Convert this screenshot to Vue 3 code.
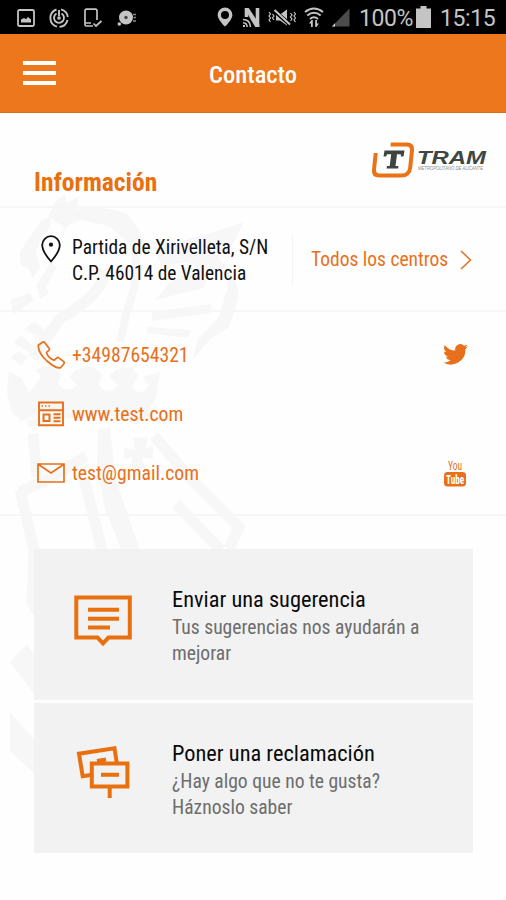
<template>
  <div class="screen">
    <div class="status-bar">
      <div class="status-left">
        <svg class="st-picture" viewBox="0 0 18 18" fill="none" stroke="currentColor" stroke-width="1.8">
          <rect x="1" y="1" width="16" height="16" rx="1.5" />
          <path d="M4 13.500V10.500l3-1.500 2 1.200L11 8l3 2.500v3z" fill="currentColor" stroke="none" />
        </svg>
        <svg class="st-sync" viewBox="0 0 20 20" fill="none" stroke="currentColor" stroke-width="1.900">
          <path d="M7.500 1.500A9 9 0 0 0 8 18.700M10.500 18.900A9 9 0 0 0 18.500 12M18.800 9A9 9 0 0 0 12 1.300" />
          <path d="M7.500 5.500a5 5 0 1 0 5 0" />
          <path d="M10 2v6" />
          <circle cx="10" cy="10" r="1.800" fill="currentColor" stroke="none" />
        </svg>
        <svg class="st-device" viewBox="0 0 18 20" fill="none" stroke="currentColor" stroke-width="1.700">
          <path d="M13 12V2.500a1.300 1.300 0 0 0-1.300-1.300H2.300A1.300 1.300 0 0 0 1 2.500v14.200A1.300 1.300 0 0 0 2.300 18H9M1 15h6" />
          <path d="M9.500 15.500l2.500 2.500 5.500-5" />
        </svg>
        <svg class="st-disc" viewBox="0 0 20 18">
          <circle cx="9" cy="8.500" r="7" fill="currentColor" />
          <circle cx="9" cy="8.500" r="1.700" fill="#444" />
          <circle cx="2.300" cy="15" r="1.800" fill="currentColor" />
          <path d="M16 5.500h3M16.500 8.500h2.500M16 12h3" stroke="#888" stroke-width="1.500" fill="none" />
        </svg>
      </div>
      <div class="status-right">
        <svg class="st-pin" viewBox="0 0 16 20">
          <path d="M8 0.500A7.400 7.400 0 0 0 .6 7.900C.6 12.500 8 19.500 8 19.500s7.400-7 7.400-11.600A7.400 7.400 0 0 0 8 .5zm0 3.400a4 4 0 1 1 0 8 4 4 0 0 1 0-8z" fill="currentColor" fill-rule="evenodd" />
        </svg>
        <svg class="st-nfc" viewBox="0 0 19 21" fill="none" stroke="currentColor">
          <path d="M4.500 10V1M15.500 20V1" stroke-width="3.600" />
          <path d="M2.700 1h4L17.300 17v3h-4L9 13z" fill="currentColor" stroke="none" />
          <path d="M1 12.500q7 0 7.500 7.500M1 15.800q4 .2 4.200 4.200" stroke-width="1.600" />
          <path d="M1 18h2v2H1z" fill="currentColor" stroke="none" />
        </svg>
        <svg class="st-mute" viewBox="0 0 28 17" fill="none" stroke="currentColor" stroke-width="1.500">
          <path d="M8 5.500v6h4l7 5V.5l-7 5z" fill="currentColor" stroke="none" />
          <path d="M6 1.500l16 14" stroke="#000" stroke-width="4" />
          <path d="M6.500 1l15.500 14.500" stroke-width="2" />
          <path d="M1 3l1.500 2L1 7l1.500 2L1 11l1.500 2M4.500 5L6 7 4.500 9 6 11M22.500 4L24 6l-1.500 2 1.500 2-1.500 2M26 3l1.500 2L26 7l1.500 2L26 11l1.500 2" stroke-width="1.200" />
        </svg>
        <svg class="st-wifi" viewBox="0 0 20 21" fill="none" stroke="currentColor" stroke-width="2">
          <path d="M1 5q9-7 18 0M3.300 8.500q6.700-5.500 13.400 0M6 12q4-3.500 8 0" />
          <path d="M7.500 13l-2.500 3.500h2V20h1.800V13zM12.500 20l2.500-3.500h-2V13h-1.800v7z" fill="currentColor" stroke="none" />
        </svg>
        <svg class="st-signal" viewBox="0 0 19 19">
          <path d="M18.500.5v18H1z" fill="#4c4c4c" />
          <path d="M4 15.300v3.200H.8z" fill="#d0d0d0" />
        </svg>
        <span class="battery-text">100%</span>
        <svg class="st-battery" viewBox="0 0 15 22">
          <path d="M4.500 0h6v2.500H15V22H0V2.500h4.500z" fill="currentColor" />
        </svg>
        <span class="clock">15:15</span>
      </div>
    </div>

    <header class="app-bar">
      <button class="menu-btn" aria-label="Menú">
        <span></span>
        <span></span>
        <span></span>
      </button>
      <h1>Contacto</h1>
    </header>

    <main class="content">
      <!-- Escudo de fondo -->
      <svg class="watermark" viewBox="0 113 260 700" fill="none" stroke="#f7f7f7" stroke-width="11">
        <g fill="#f7f7f7" stroke="none">
          <path d="M48 216l8-15 9-7 2 9 12-7-3 13c20-3 40 0 51 5l12 16 10 23-14-6-12-9-14-12-28-6-14 6-5 13 2-13-7-3z" />
          <path d="M41 221l11-6-2 12-9 12-5 14 4 14-7 11-4-9-8-4-1-13 10-15z" />
          <path d="M37 284l14-22 5 6-10 19 3 6-9 6z" />
          <path d="M150 240l22 3 42-11 30-10-12 23-14 14c13 9 22 25 20 41l-9 27-19 12-18 22 6-22 21-22 9-31-4-18-14 3-54 28 13-16 27-16-9-5-25 4z" />
          <path d="M155 299l56-29-8 18-48 12zM152 312l59-8v9l-59 8zM148 327l43 3-3 8-42-5z" />
          <path d="M24 329l10-7 17 12-7 6zM14 343l7-8 14 13-4 6zM10 300l20-7 4 7-20 14zM10 357l9-6 8 6-5 9z" />
          <path d="M9 372l13 6 7 15 12-16-6-7 15-5 11 9-3 9c5 9 14 8 19 2l-8-8 7-7 15-4 12 8-5 10c6 9 14 9 20 1l-9-9 8-7 15-2 6 9-6 11c7 8 13 6 17-2l-6-8 17-5-4 26-11 19-9 8-17-10-33-6-45 4-19 8-10-8-5-20z" />
          <path d="M98 430l12-3 7 70 16 52h-12l-16-40-8-45z" />
          <path d="M133 438l15-1-3 12 8-3v13l-11-2 3 11h-16l4-11-9 2v-11l11 2z" />
          <path d="M10 662l17-18 8 12v39zM10 713l25 27v34l-25-23z" />
        </g>
        <path d="M130 235c9 23 8 46-3 76l-7 31" stroke-width="8" />
        <path d="M106 270c-6 27-29 37-47 50l-26 38" />
        <path d="M33 434l4 43M20 490l14 60M20 492l30-14 36-22M84 478l18 72M112 485l22 65M154 436l37 43 48 48-10 22M176 504l45 46" />
        <path d="M32 550l-2 53 5 10M28 424q68-22 138-3" stroke-width="7" />
      </svg>

      <section class="info-head">
        <h2>Información</h2>
        <svg class="tram-logo" viewBox="0 0 116 38">
          <g transform="skewX(-6)" fill="none" stroke="#ea7318" stroke-width="4">
            <path d="M20 3.500h16q6 0 6 6v17q0 8-8 8H12q-6 0-6-6V12" />
          </g>
          <path d="M13.500 9.500h20l-1 6h-2.500l-.3-2.300h-3.700L24.500 25h3l-.4 2.500H15.500L16 25h2.700l1.500-11.800h-4L15 15.500h-2.500z" fill="#3f4540" />
          <text x="46" y="22.500" textLength="69" lengthAdjust="spacingAndGlyphs" class="logo-name">TRAM</text>
          <text x="47" y="28.500" textLength="65" lengthAdjust="spacingAndGlyphs" class="logo-sub">METROPOLITANO DE ALICANTE</text>
        </svg>
      </section>

      <section class="location">
        <svg class="loc-pin" viewBox="0 0 20 28" fill="none" stroke="#111" stroke-width="1.800">
          <path d="M10 26.500S1.200 16.500 1.200 10a8.800 8.800 0 0 1 17.600 0c0 6.500-8.800 16.500-8.800 16.500z" />
          <circle cx="10" cy="9.700" r="2.100" fill="#111" stroke="none" />
        </svg>
        <p class="address">Partida de Xirivelleta, S/N<br />C.P. 46014 de Valencia</p>
        <a class="centers">
          <span>Todos los centros</span>
          <svg viewBox="0 0 12 20" fill="none" stroke="currentColor" stroke-width="1.500">
            <path d="M1 1l9.500 9L1 19" />
          </svg>
        </a>
      </section>

      <section class="contacts">
        <div class="contact-row">
          <svg class="row-icon" viewBox="0 0 28 28" fill="none" stroke="currentColor" stroke-width="1.700" stroke-linejoin="round">
            <path d="M1.300 4.200L5.500 1.200Q7 .5 8 2l4.200 5.500q.6 1-.3 1.900L9.500 11.300Q9.600 14 13.200 17q2.500 2.200 4.300 2.100l2.300-2.300q1-.8 2 0l4.900 3.800q1 1 .2 2.200l-3.300 3.900Q19.500 28.300 10 20 .8 11.500 1.300 4.200z" />
          </svg>
          <span>{{ contact.phone }}</span>
          <svg class="twitter" viewBox="0 0 24 20">
            <path d="M24 2.400a10 10 0 0 1-2.800.8A4.900 4.900 0 0 0 23.300.5a10 10 0 0 1-3.100 1.200 4.900 4.900 0 0 0-8.400 4.500A14 14 0 0 1 1.700 1a4.900 4.900 0 0 0 1.500 6.600A4.900 4.900 0 0 1 1 7a4.900 4.900 0 0 0 3.900 4.900 5 5 0 0 1-2.200.1 4.900 4.900 0 0 0 4.600 3.400A9.900 9.900 0 0 1 0 17.500 14 14 0 0 0 21.500 5z" fill="currentColor" />
          </svg>
        </div>
        <div class="contact-row">
          <svg class="row-icon" viewBox="0 0 28 28" fill="none" stroke="currentColor" stroke-width="1.900">
            <path d="M2 2.500h24v22.700H2zM2 10.300h24" />
            <path d="M4.500 6h1.500M8 6h1.500M11.500 6H13" stroke-width="1.500" />
            <path d="M6.500 14.500h6v6.500h-6z" stroke-width="2" />
            <path d="M16.500 14.300h7M16.500 17.700h7M16.500 21.200h7" />
          </svg>
          <span>{{ contact.web }}</span>
        </div>
        <div class="contact-row">
          <svg class="row-icon" viewBox="0 0 28 28" fill="none" stroke="currentColor" stroke-width="1.700">
            <path d="M1 5h26v18H1zM1.500 5.500L14 14l12.500-8.500" />
          </svg>
          <span>{{ contact.mail }}</span>
          <svg class="youtube" viewBox="0 0 22 29">
            <text x="4" y="11" textLength="14" lengthAdjust="spacingAndGlyphs" class="yt-you">You</text>
            <rect x="0" y="13" width="22" height="14.500" rx="3.500" fill="currentColor" />
            <text x="2" y="25" textLength="18" lengthAdjust="spacingAndGlyphs" class="yt-tube">Tube</text>
          </svg>
        </div>
      </section>

      <section class="cards">
        <article class="card">
          <svg class="card-icon" viewBox="0 0 58 58" fill="none" stroke="#e9700f" stroke-width="4">
            <path d="M2.300 7.500h53.500v40H34.500L29 53.300l-5.500-5.800H2.300z" />
            <path d="M14 19.800h31M14 28.700h31M14 37.500h22" />
          </svg>
          <div class="card-text">
            <h3>Enviar una sugerencia</h3>
            <p>Tus sugerencias nos ayudarán a<br />mejorar</p>
          </div>
        </article>
        <article class="card">
          <svg class="card-icon" viewBox="0 0 58 58" fill="none" stroke="#e9700f" stroke-width="4">
            <path d="M16.500 31L8.700 32.300 5 9.700l35.500-5.500 2.300 15" />
            <path d="M23 17l9-1.500" />
            <path d="M17.800 19.500h35.600v23H17.800zM27 30.700h18M35.700 42.500V54" />
          </svg>
          <div class="card-text">
            <h3>Poner una reclamación</h3>
            <p>¿Hay algo que no te gusta?<br />Háznoslo saber</p>
          </div>
        </article>
      </section>
    </main>
  </div>
</template>

<script setup>
const contact = {
  phone: '+34987654321',
  web: 'www.test.com',
  mail: 'test@gmail.com',
};
</script>

<style>
body {
  background: #fff;
}
</style>

<style scoped>
.screen {
  width: 506px;
  height: 900px;
  overflow: hidden;
  background: #fefefe;
  font-family: "Roboto Condensed", Roboto, sans-serif;
  color: #111;
}

h1,
h2,
h3,
p {
  margin: 0;
}

svg {
  display: block;
  flex-shrink: 0;
}

/* Barra de estado */
.status-bar {
  display: flex;
  justify-content: space-between;
  height: 34px;
  box-sizing: border-box;
  padding: 0 10px 0 17px;
  background: #000;
  color: #c4c4c4;
  font-family: Roboto, sans-serif;
  font-size: 23px;
}

.status-left,
.status-right {
  display: flex;
  align-items: center;
}

.status-left {
  padding-top: 1px;
}

.st-picture {
  width: 18px;
  height: 18px;
}

.st-sync {
  width: 20px;
  height: 20px;
  margin-left: 14px;
}

.st-device {
  width: 18px;
  height: 20px;
  margin-left: 15px;
}

.st-disc {
  width: 20px;
  height: 18px;
  margin-left: 15px;
}

.st-pin {
  width: 16px;
  height: 20px;
}

.st-nfc {
  width: 19px;
  height: 21px;
  margin-left: 9px;
}

.st-mute {
  width: 28px;
  height: 17px;
  margin-left: 7px;
}

.st-wifi {
  width: 20px;
  height: 21px;
  margin-left: 8px;
}

.st-signal {
  width: 19px;
  height: 19px;
  margin-left: 7px;
}

.battery-text {
  width: 54px;
  margin-left: 9px;
  padding-top: 3px;
  letter-spacing: -0.4px;
  line-height: 36px;
}

.st-battery {
  width: 15px;
  height: 22px;
  margin-left: 3px;
}

.clock {
  width: 56px;
  margin-left: 9px;
  padding-top: 3px;
  letter-spacing: -0.4px;
  line-height: 36px;
}

/* Cabecera */
.app-bar {
  display: grid;
  grid-template-columns: 56px 1fr 56px;
  align-items: center;
  height: 79px;
  box-sizing: border-box;
  background: #ec771d;
  border-bottom: 1px solid #e2690f;
  color: #fff;
}

.menu-btn {
  display: flex;
  flex-direction: column;
  gap: 6px;
  width: 56px;
  padding: 0 0 0 23px;
  border: 0;
  background: none;
}

.menu-btn span {
  height: 4px;
  background: #fff;
}

.app-bar h1 {
  font-size: 24.5px;
  font-weight: 500;
  line-height: 32px;
  text-align: center;
  padding-top: 3px;
}

/* Contenido */
.content {
  position: relative;
}

.watermark {
  position: absolute;
  top: 0;
  left: 0;
  width: 260px;
  height: 700px;
}

.info-head {
  position: relative;
  display: flex;
  justify-content: space-between;
  height: 95px;
  box-sizing: border-box;
  padding: 27px 19px 0 34px;
  border-bottom: 2px solid #f6f6f6;
}

.info-head h2 {
  padding-top: 26px;
  font-size: 25.5px;
  font-weight: 700;
  line-height: 33px;
  color: #e8700f;
}

.tram-logo {
  width: 116px;
  height: 38px;
  margin-top: 1px;
}

.logo-name {
  font-family: "Liberation Sans", sans-serif;
  font-size: 18px;
  font-weight: 700;
  font-style: italic;
  fill: #3f4540;
}

.logo-sub {
  font-family: "Liberation Sans", sans-serif;
  font-size: 4.5px;
  font-style: italic;
  fill: #8a8d8a;
}

.location {
  position: relative;
  display: flex;
  height: 104px;
  box-sizing: border-box;
  padding: 27px 34px 0 41px;
  border-bottom: 2px solid #f6f6f6;
}

.loc-pin {
  width: 20px;
  height: 28px;
}

.address {
  width: 220px;
  margin-left: 11px;
  font-size: 19.4px;
  line-height: 26px;
  white-space: nowrap;
}

.centers {
  display: flex;
  flex: 1;
  align-items: center;
  justify-content: space-between;
  height: 50px;
  padding-left: 18px;
  border-left: 1px solid #f4f4f4;
  font-size: 19.5px;
  color: #e8701a;
  white-space: nowrap;
}

.centers span {
  padding-bottom: 1px;
}

.centers svg {
  width: 12px;
  height: 20px;
}

.contacts {
  position: relative;
  display: flex;
  flex-direction: column;
  height: 204px;
  box-sizing: border-box;
  padding: 13px 38px 0 37px;
  border-bottom: 2px solid #f6f6f6;
  color: #e8701a;
  font-size: 19.7px;
}

.contact-row {
  display: flex;
  align-items: center;
  height: 59.3px;
}

.row-icon {
  width: 28px;
  height: 28px;
  margin-right: 7px;
}

.contact-row span {
  flex: 1;
  padding-top: 1px;
}

.twitter {
  width: 25px;
  height: 21px;
}

.youtube {
  width: 22px;
  height: 29px;
  margin-right: 2px;
  overflow: visible;
}

.yt-you {
  font-size: 12px;
  fill: currentColor;
}

.yt-tube {
  font-size: 12px;
  font-weight: 700;
  fill: #fff;
}

/* Tarjetas */
.cards {
  position: relative;
  display: flex;
  flex-direction: column;
  gap: 3px;
  padding: 33px 33px 0 34px;
}

.card {
  display: flex;
  height: 150.5px;
  box-sizing: border-box;
  padding: 35px 0 0 40px;
  background: #f2f2f2;
}

.card-icon {
  width: 58px;
  height: 58px;
  margin-top: 6px;
}

.card-text {
  margin-left: 40px;
  white-space: nowrap;
}

.card h3 {
  font-size: 22.4px;
  font-weight: 450;
  line-height: 30px;
  color: #0a0a0a;
}

.card p {
  padding-top: 1px;
  font-size: 19.6px;
  line-height: 26px;
  color: #6d6d6d;
}
</style>
